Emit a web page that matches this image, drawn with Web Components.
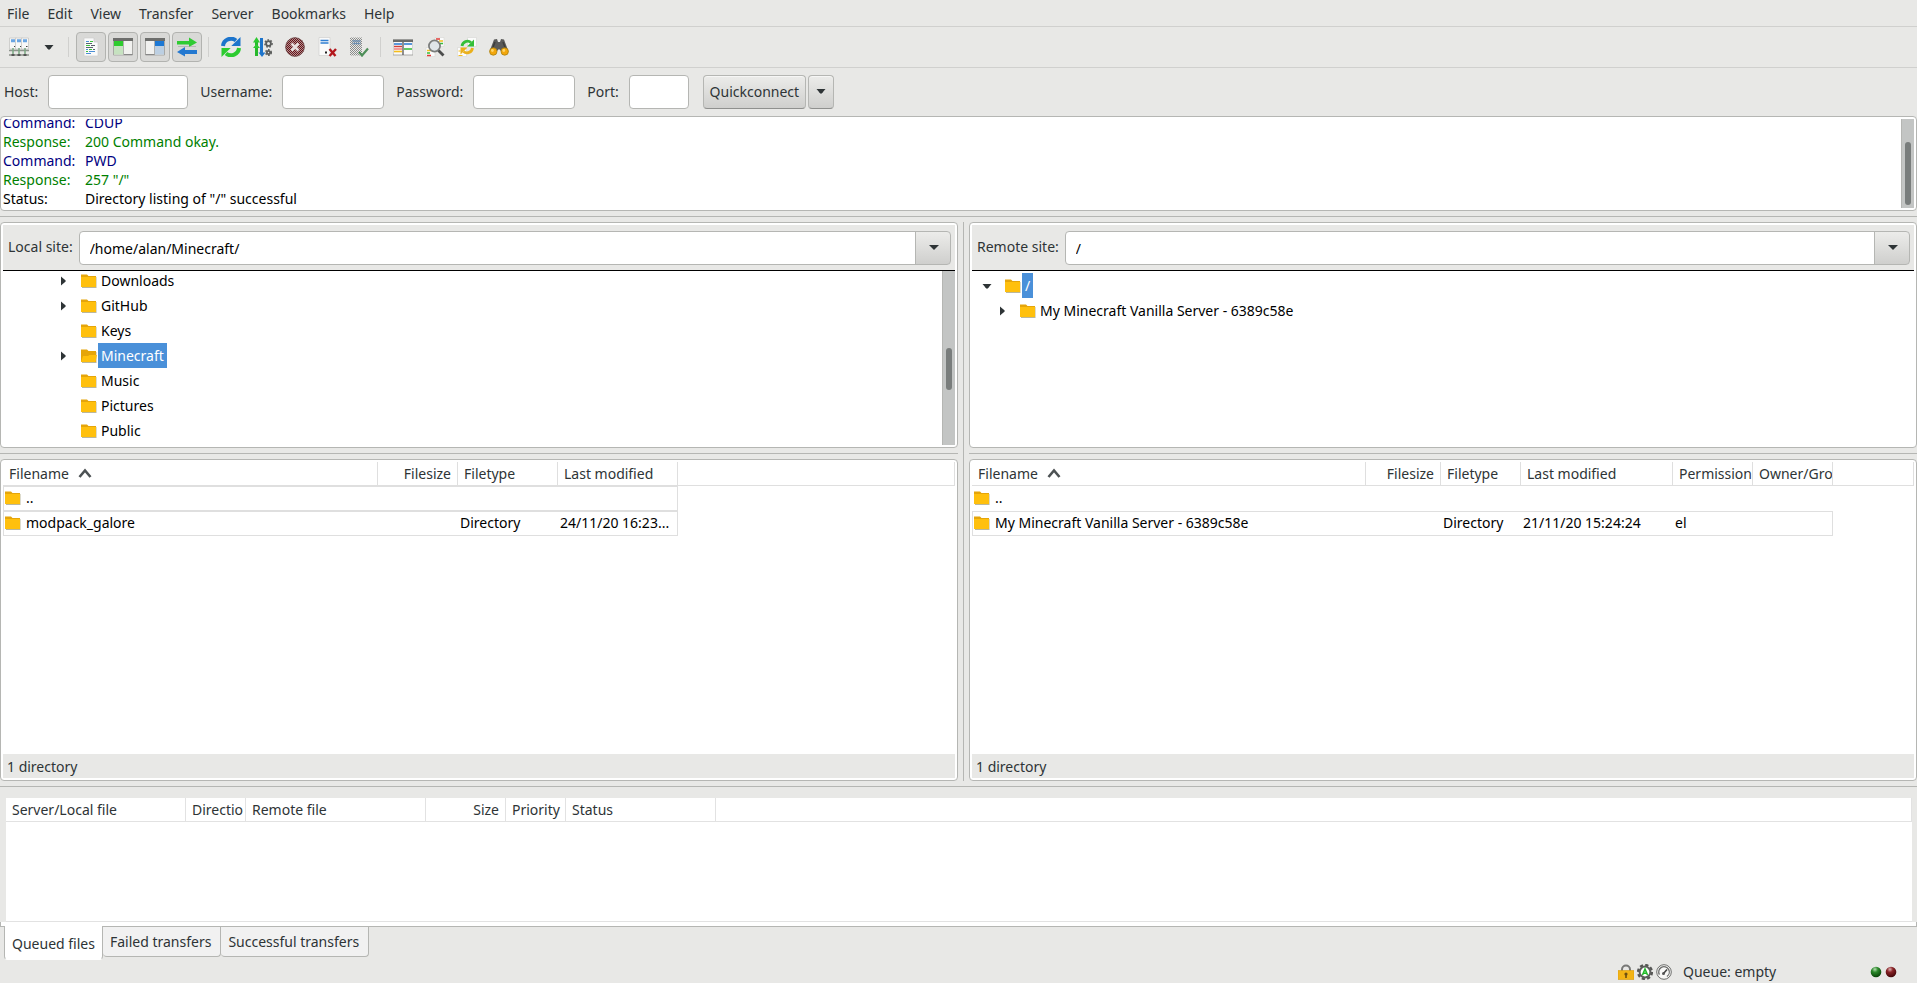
<!DOCTYPE html>
<html lang="en">
<head>
<meta charset="utf-8">
<title>FileZilla</title>
<style>
  html, body { margin: 0; }
  body {
    --bg: #e8e8e6; --line: #b5b6b3; --soft: #d0d0ce; --grid: #dfdfdf;
    --ink: #2e3436; --sel: #4a90d9; --base: #ffffff;
    background: var(--bg); color: var(--ink);
    font: 14px/19px "Noto Sans", sans-serif;
  }
</style>
</head>
<body>
<fz-app></fz-app>
<script>
const RESET = `*{box-sizing:border-box}
button,input,select{font:inherit;color:inherit;margin:0}
button{background:none;border:0;padding:0}
:focus-visible{outline:1px solid var(--sel)}`;

function define(name, css, html) {
  customElements.define(name, class extends HTMLElement {
    constructor() {
      super();
      this.attachShadow({ mode: 'open' });
    }
    connectedCallback() {
      const body = typeof html === 'function' ? html(this) : html;
      this.shadowRoot.innerHTML = `<style>${RESET}${css}</style>${body}`;
    }
  });
}

const FOLDER = `<path d="M1 2.5h5l1.500 1.500H15.500v11H1z" fill="#a9a583" opacity=".8"/><path d="M0 1.500h6L7.500 3H15v11H0z" fill="#e5a50a"/>`;
const GEAR = (x, y, r, c) => `<circle cx="${x}" cy="${y}" r="${r}" fill="none" stroke="${c}" stroke-width="1.800"/><circle cx="${x}" cy="${y}" r="${r + 1.2}" fill="none" stroke="${c}" stroke-width="1.500" stroke-dasharray="1.600 1.500"/>`;
const SERVER = (x) => `<path d="M${x} 1h7v11h-7z" fill="#f8f8f8" stroke="#c6c6c4" stroke-width=".8"/><path d="M${x + 1.5} 3h4M${x + 1.5} 4.500h4" stroke="#6aa5e2" stroke-width="1.500"/><path d="M${x + 4.500} 9.500h1.500" stroke="#444" stroke-width="1.200"/>`;
const SHEET = (x, y) => `<path d="M${x} ${y}h9v9h-9z" fill="#fbfbfb" stroke="#d6d6d4" stroke-width=".6"/>`;
const ICONS = {
  sites: [20, `${SERVER(0.5)}${SERVER(6.5)}${SERVER(12.5)}<path d="M0 13.500h20M0 18h20" stroke="#8d938c" stroke-width="1.600"/><path d="M4 11v7M10 11v7M16 11v7" stroke="#79a882" stroke-width="1.500"/><path d="M2.500 18h3M8.500 18h3M14.500 18h3" stroke="#555" stroke-width="2.200"/>`],
  log: [20, `<path d="M3 1h10l4 4v14H3z" fill="#fafafa" stroke="#cfcfcd" stroke-width=".7"/><path d="M13 1v4h4" fill="#ddd" stroke="#c4c4c2" stroke-width=".6"/><path d="M5 4.500h3M5 12.500h2M8 14.500h6M5 16.500h5" stroke="#4c8fd6" stroke-width="1.200"/><path d="M9 4.500h3M5 8.500h4M8 12.500h3M5 14.500h2" stroke="#39c03b" stroke-width="1.200"/><path d="M5 6.500h6M10 8.500h4M5 10.500h7M12 12.500h2" stroke="#58626b" stroke-width="1.200"/>`],
  local: [20, `<path d="M.5 2h19v16H.5z" fill="#f1f1ef" stroke="#a8a8a5"/><path d="M0 1h20v3H0z" fill="#6d6e6c"/><path d="M1 4h9v5H1z" fill="#2ecc2e"/><path d="M1 9h9v8.500H1z" fill="#c6e2c0"/><path d="M10.500 4v14" stroke="#b0b0ae"/><path d="M11 17.500h8.500" stroke="#888"/>`],
  remote: [20, `<path d="M.5 2h19v16H.5z" fill="#f1f1ef" stroke="#a8a8a5"/><path d="M0 1h20v3H0z" fill="#6d6e6c"/><path d="M10 4h9v5h-9z" fill="#1c78d4"/><path d="M10 9h9v8.500h-9z" fill="#bccfe2"/><path d="M9.500 4v14" stroke="#b0b0ae"/><path d="M.5 17.500H9.500" stroke="#888"/>`],
  transfers: [20, `<path d="M0 4h12V.5l8 5-8 4.500V7.500H0z" fill="#2fcb32"/><path d="M1 9.500h18" stroke="#9a9a98" opacity=".5"/><path d="M20 13H8v-3l-8 5 8 4.500V17h12z" fill="#2378d0"/>`],
  refresh: [20, `<path d="M2 9a8 7.800 0 0 1 13-5.500" fill="none" stroke="#1c74cc" stroke-width="4"/><path d="M19.500 0v9h-9.200z" fill="#1c74cc"/><path d="M18 11a8 7.800 0 0 1-13 5.500" fill="none" stroke="#2ccb30" stroke-width="4"/><path d="M.5 20v-9h9.200z" fill="#2ccb30"/>`],
  process: [20, `<path d="M3.500 3v16" stroke="#27b82b" stroke-width="3"/><path d="M0 5.500L3.500 0 7 5.500zM0 11h7l-3.500-4z" fill="#2cc930"/><path d="M8.500 1v15" stroke="#1d74cb" stroke-width="3"/><path d="M5.500 15.500L9 20l3.500-4.500z" fill="#1d74cb"/>${GEAR(15.5, 6.5, 2.4, '#5b5d5c')}${GEAR(15.5, 15.5, 1.6, '#5b5d5c')}`],
  cancel: [20, `<defs><pattern id="d" width="2" height="2" patternUnits="userSpaceOnUse"><path d="M0 0h1v1H0zM1 1h1v1H1z" fill="#6a1016"/></pattern></defs><circle cx="10" cy="10" r="9.500" fill="#b09494"/><circle cx="10" cy="10" r="9.500" fill="url(#d)"/><circle cx="10" cy="10" r="9.300" fill="none" stroke="#6b4a4a" stroke-width=".8"/><path d="M6.500 6.500l7 7M13.500 6.500l-7 7" stroke="#e7dede" stroke-width="2.600"/>`],
  disconnect: [20, `<path d="M2 .5h11v18H2z" fill="#fafafa" stroke="#d0d0ce" stroke-width=".7"/><path d="M3.500 3.500h8M3.500 6h8" stroke="#2e7dd1" stroke-width="1.600"/><path d="M8 15.500h2" stroke="#222" stroke-width="2"/><path d="M12.500 12l6 7M19 12l-6.500 7" stroke="#b3161c" stroke-width="2.400"/>`],
  reconnect: [20, `<defs><pattern id="d" width="2" height="2" patternUnits="userSpaceOnUse"><path d="M0 0h1v1H0zM1 1h1v1H1z" fill="#8b8d8c"/></pattern></defs><path d="M1 .5h12v18H1z" fill="#e9e9e7"/><path d="M1 .5h12v18H1z" fill="url(#d)"/><path d="M3.500 4h8M3.500 6.500h8" stroke="#6c8fb2" stroke-width="1.300"/><path d="M10 15l3 3.500 6-7" fill="none" stroke="#4e8f59" stroke-width="2.200"/>`],
  filter: [20, `<path d="M0 3h20v15H0z" fill="#fafafa" stroke="#9a9a98" stroke-width=".8"/><path d="M0 2.500h20V5H0z" fill="#6b6c6a"/><path d="M1 7h8" stroke="#2577d0" stroke-width="1.500"/><path d="M1 9.500h8" stroke="#d3403a" stroke-width="1.500"/><path d="M1 12h8" stroke="#ef3b38"/><path d="M1 14.500h8" stroke="#f4bd1c" stroke-width="1.600"/><path d="M11 7h8" stroke="#2577d0" stroke-width="1.500"/><path d="M11 12h8" stroke="#2fb832" stroke-width="1.500"/><path d="M10 5v13" stroke="#555" stroke-width="1.300"/>`],
  search: [20, `${SHEET(10, 0.5)}${SHEET(1, 10.5)}<path d="M11 2h4M2 18.500h4" stroke="#e03a35" stroke-width="1.500"/><path d="M14 4h4M2 13.500h4" stroke="#f4bd1c" stroke-width="1.500"/><path d="M15 6.500h3M2 16h3" stroke="#35bf38" stroke-width="1.500"/><circle cx="9.500" cy="9" r="5.600" fill="#dfe5e8" stroke="#7b7d7c" stroke-width="1.700"/><path d="M13.500 13.500l5 5" stroke="#4c4d4c" stroke-width="2.800"/>`],
  sync: [20, `${SHEET(10.5, 0.5)}${SHEET(0.5, 10.5)}<path d="M5 9a5.500 5.500 0 0 1 9-3.500" fill="none" stroke="#35bf38" stroke-width="2.800"/><path d="M17 2.500V9.500h-7z" fill="#35bf38"/><path d="M15.500 11a5.500 5.500 0 0 1-9 3.500" fill="none" stroke="#eab01c" stroke-width="2.800"/><path d="M3.500 17.500v-7h7z" fill="#eab01c"/><path d="M1.500 14h2M1.500 18.500h4" stroke="#f4bd1c"/>`],
  find: [20, `<path d="M5 2.500l3-.5 1 3h2l1-3 3 .5 4.500 12h-7L10 12l-2.500 2.500H.5z" fill="#5a5a59"/><path d="M6 5l-3 8M14 5l3 8" stroke="#3e3f3e" stroke-width="1.500"/><circle cx="4.300" cy="14.500" r="3.700" fill="#f3a70c" stroke="#a8800f" stroke-width=".8"/><circle cx="15.700" cy="14.500" r="3.700" fill="#f3a70c" stroke="#a8800f" stroke-width=".8"/><circle cx="3.400" cy="13.500" r="1.400" fill="#ffd66b"/><circle cx="14.800" cy="13.500" r="1.400" fill="#ffd66b"/>`],
  folder: [16, `${FOLDER}<path d="M0 4h15v10H0z" fill="#ffc00d"/>`],
  open: [16, `${FOLDER}<path d="M2 8h5l1.500-1H16l-1.500 7H0z" fill="#ffc00d"/>`],
  down: [16, `<path d="M3.500 6h9L9.500 9.500h-3z" fill="var(--ink)"/><path d="M6 9h4l-2 2z" fill="var(--ink)"/>`],
  right: [16, `<path d="M6 3.500v9l4-3.500v-2z" fill="var(--ink)"/><path d="M9.500 6.500v3L11 8z" fill="var(--ink)"/>`],
  sort: [16, `<path d="M2.500 11L8 4.500l5.500 6.500" fill="none" stroke="#4d5254" stroke-width="2.600"/>`],
  lock: [16, `<path d="M4 8V5.500a4 4 0 0 1 8 0V8" fill="none" stroke="#777876" stroke-width="2"/><path d="M0 6.500h16v9H0z" fill="#f3b415" stroke="#d99a0b" stroke-width=".6"/><circle cx="8" cy="10" r="1.600" fill="#6d4f12"/><path d="M8 10v4" stroke="#6d4f12" stroke-width="1.600"/>`],
  auto: [16, `<circle cx="8" cy="8" r="6.900" fill="none" stroke="#555654" stroke-width="2.400" stroke-dasharray="3.200 2.220"/><circle cx="8" cy="8" r="5.400" fill="#fff" stroke="#5d5e5c" stroke-width="2"/><path d="M5.500 11L8 5l2.500 6M6.200 9.200h3.600" fill="none" stroke="#1fbb27" stroke-width="1.600"/>`],
  speed: [16, `<circle cx="8" cy="8" r="7.300" fill="#f7f7f6" stroke="#6c6d6b" stroke-width="1"/><circle cx="8" cy="8" r="5.300" fill="none" stroke="#6c6d6b" stroke-width="1.300" stroke-dasharray="24 9.300" transform="rotate(150 8 8)"/><path d="M7.500 9.500L11 5.500" stroke="#3f403f" stroke-width="1.500"/><circle cx="7.500" cy="9.500" r="1.500" fill="#555"/>`],
  recv: [12, `<defs><radialGradient id="g" cx=".4" cy=".25" r=".8"><stop offset="0" stop-color="#b8dcb4"/><stop offset=".35" stop-color="#2b8a2b"/><stop offset="1" stop-color="#043c04"/></radialGradient></defs><circle cx="6" cy="6" r="5.300" fill="url(#g)"/>`],
  send: [12, `<defs><radialGradient id="g" cx=".4" cy=".25" r=".8"><stop offset="0" stop-color="#dcb4b4"/><stop offset=".35" stop-color="#8a2428"/><stop offset="1" stop-color="#3c0406"/></radialGradient></defs><circle cx="6" cy="6" r="5.300" fill="url(#g)"/>`]
};

define('fz-icon', `:host{display:inline-flex;flex:none}svg{display:block}`, el => {
  const [s, art] = ICONS[el.getAttribute('name')];
  return `<svg width="${s}" height="${s}" viewBox="0 0 ${s} ${s}" aria-hidden="true">${art}</svg>`;
});

define('fz-scrollbar', `:host{display:flex;flex-direction:column;flex:none;width:13px;background:#c3c5c4;border-left:1px solid var(--line);padding:3px}
i{flex:var(--before,0) 0 0}b{flex:var(--size,1) 0 0;background:#797d7c;border-radius:3px;width:6px}u{flex:var(--after,0) 0 0}`,
  `<i></i><b></b><u></u>`);

/* Draggable-looking divider between two areas. */
define('fz-sash', `:host{display:flex;flex:none;height:11px;flex-direction:column;justify-content:center}
:host([vertical]){height:auto;width:11px;flex-direction:row}
i{flex:none;height:1px;background:var(--line)}
:host([vertical]) i{height:auto;width:1px}`, `<i></i>`);

define('fz-frame', `:host{display:flex;flex-direction:column;flex:none;min-width:0;background:var(--base);border:1px solid var(--line);border-radius:4px;padding:2px}`, `<slot></slot>`);

define('fz-menubar', `:host{display:block;border-bottom:1px solid var(--soft)}
nav{display:flex;gap:18px;padding:4px 7px 3px}`,
  `<nav>${['File', 'Edit', 'View', 'Transfer', 'Server', 'Bookmarks', 'Help'].map(t => `<button>${t}</button>`).join('')}</nav>`);

define('fz-tool', `:host{display:flex}
button{display:flex;align-items:center;justify-content:center;width:30px;height:30px;border:1px solid transparent;border-radius:4px}
:host([narrow]) button{width:26px}
button[aria-pressed=true]{background:#d9d9d7;border-color:#b2b3b0}`,
  el => `<button aria-label="${el.getAttribute('label')}"${el.hasAttribute('on') ? ' aria-pressed="true"' : ''}><fz-icon name="${el.getAttribute('icon')}"></fz-icon></button>`);

const tool = (icon, label, extra = '') => `<fz-tool icon="${icon}" label="${label}" ${extra}></fz-tool>`;
define('fz-toolbar', `:host{display:flex;align-items:center;gap:2px;padding:5px 4px;border-bottom:1px solid var(--soft)}
hr{flex:none;width:1px;height:20px;border:0;margin:0 5px 0 4px;background:var(--soft)}`,
  tool('sites', 'Site Manager') + tool('down', 'Site list', 'narrow') + '<hr>' +
  tool('log', 'Message log', 'on') + tool('local', 'Local tree', 'on') + tool('remote', 'Remote tree', 'on') + tool('transfers', 'Transfer queue', 'on') + '<hr>' +
  tool('refresh', 'Refresh') + tool('process', 'Process queue') + tool('cancel', 'Cancel') + tool('disconnect', 'Disconnect') + tool('reconnect', 'Reconnect') + '<hr>' +
  tool('filter', 'Filters') + tool('search', 'Compare directories') + tool('sync', 'Synchronized browsing') + tool('find', 'Find files'));

define('fz-quickconnect', `:host{display:flex;align-items:center;padding:7px 4px}
label{margin-right:10px;padding-bottom:2px}
input{height:34px;border:1px solid var(--line);border-radius:4px;background:var(--base);padding:0 8px;margin-right:12px}
.host{width:140px}.mid{width:102px}.port{width:60px}
button{height:34px;padding-bottom:2px;border:1px solid var(--line);border-bottom-color:#8f908e;border-radius:4px;background:linear-gradient(#ececea,#cfcfcd);display:flex;align-items:center;justify-content:center;box-shadow:inset 0 1px #f6f6f5}
.go{width:103px;margin:0 2px}.more{width:26px}`,
  `<label for="h">Host:</label><input id="h" class="host"><label for="u">Username:</label><input id="u" class="mid"><label for="p">Password:</label><input id="p" class="mid" type="password"><label for="o">Port:</label><input id="o" class="port"><button class="go">Quickconnect</button><button class="more" aria-label="Recent servers"><fz-icon name="down"></fz-icon></button>`);

define('fz-log-line', `:host{display:flex;flex:none}span{width:82px;flex:none}
:host([kind=Command]){color:#000080}:host([kind=Response]){color:#008000}:host([kind=Status]){color:#000}`,
  el => `<span>${el.getAttribute('kind')}:</span><slot></slot>`);

define('fz-log', `:host{display:block}
.row{display:flex;height:89px}
.lines{flex:1;min-width:0;overflow:hidden;display:flex;flex-direction:column;justify-content:flex-end}
fz-scrollbar{--before:20;--size:64;--after:0}`,
  `<fz-frame><div class="row"><div class="lines"><slot></slot></div><fz-scrollbar></fz-scrollbar></div></fz-frame>`);

define('fz-site-bar', `:host{display:flex;align-items:center;background:var(--bg);border-bottom:1px solid #000;padding:6px 4px 5px 5px;gap:6px}
label{padding-bottom:3px}
select{appearance:none;flex:1;min-width:0;height:34px;border:1px solid var(--line);border-radius:4px;padding:0 40px 0 10px;color:#000;
background:url("data:image/svg+xml,%3Csvg xmlns='http://www.w3.org/2000/svg' width='10' height='6'%3E%3Cpath d='M0 0h10L6 4 5 5 4 4z' fill='%232e3436'/%3E%3C/svg%3E") no-repeat right 11px center, linear-gradient(var(--line),var(--line)) no-repeat right 34px top/1px 100%, linear-gradient(#ececea,#cfcfcd) no-repeat right/34px 100%, var(--base)}`,
  el => `<label for="s">${el.getAttribute('label')}</label><select id="s"><option>${el.getAttribute('path')}</option></select>`);

define('fz-tree-item', `:host{display:flex;flex:none;align-items:center;height:25px;color:#000;padding-left:calc(7px + 15px * var(--depth,0))}
.arrow{width:26px;height:16px}
.label{line-height:25px;padding:0 3px;margin-left:1px;white-space:nowrap}
:host([selected]) .label{background:var(--sel);color:#fff}`,
  el => `<span class="arrow">${el.hasAttribute('arrow') ? `<fz-icon name="${el.getAttribute('arrow')}"></fz-icon>` : ''}</span><fz-icon name="${el.getAttribute('icon') || 'folder'}"></fz-icon><span class="label"><slot></slot></span>`);

define('fz-tree', `:host{display:flex;height:174px}
.items{flex:1;min-width:0;display:flex;flex-direction:column;overflow:hidden;padding-top:2px}
:host([scrolled]) .items{justify-content:flex-end;padding:0 0 2px}
fz-scrollbar{--before:75;--size:43;--after:53}`,
  el => `<div class="items"><slot></slot></div>${el.hasAttribute('scrolled') ? '<fz-scrollbar></fz-scrollbar>' : ''}`);

/* Column table. cols: [title, width, align]; rows: arrays of texts, boxed rows get a border. */
function tableHTML(cols, rows) {
  const head = cols.map(([t, w, a], i) =>
    `<th style="width:${w}px"${a ? ' class="r"' : ''}>${t}${i === 0 && rows.length ? '<fz-icon name="sort"></fz-icon>' : ''}</th>`).join('');
  const body = rows.map(r => `<tr${r.box ? ' class="box"' : ''}>${cols.map((c, i) =>
    `<td>${i === 0 ? '<fz-icon name="folder"></fz-icon>' : ''}<span>${r.cells[i] || ''}</span></td>`).join('')}<td class="rest"></td></tr>`).join('');
  return `<table><thead><tr>${head}<th></th></tr></thead><tbody>${body}</tbody></table>`;
}
const TABLE = `table{width:100%;table-layout:fixed;border-collapse:separate;border-spacing:0;background:var(--base)}
th{height:24px;padding:0 0 0 6px;font-weight:400;text-align:left;border:solid var(--grid);border-width:0 1px 1px 0;white-space:nowrap;overflow:hidden}
th.r{text-align:right;padding:0 6px 0 0}
th fz-icon{vertical-align:-3px;margin-left:8px}
td{height:25px;padding:0 0 2px 2px;white-space:nowrap;overflow:hidden;color:#000;border:solid transparent;border-width:1px 0}
td:first-child{padding-left:1px;border-left-width:1px}
td fz-icon{vertical-align:-3px;margin-right:5px}
.box td:not(.rest){border-color:var(--grid)}
.box td:nth-last-child(2){border-right:1px solid var(--grid)}`;

const LISTS = {
  local: {
    cols: [['Filename', 375], ['Filesize', 80, 1], ['Filetype', 100], ['Last modified', 120]],
    rows: [{ box: 1, cells: ['..'] }, { box: 1, cells: ['modpack_galore', '', 'Directory', '24/11/20 16:23...'] }]
  },
  remote: {
    cols: [['Filename', 394], ['Filesize', 75, 1], ['Filetype', 80], ['Last modified', 152], ['Permission', 80], ['Owner/Gro', 80]],
    rows: [{ cells: ['..'] }, { box: 1, cells: ['My Minecraft Vanilla Server - 6389c58e', '', 'Directory', '21/11/20 15:24:24', 'el'] }]
  },
  queue: {
    cols: [['Server/Local file', 180], ['Directio', 60], ['Remote file', 180], ['Size', 80, 1], ['Priority', 60], ['Status', 150]],
    rows: []
  }
};

define('fz-table', `:host{display:block;overflow:hidden}${TABLE}`, el => {
  const { cols, rows } = LISTS[el.getAttribute('list')];
  return tableHTML(cols, rows);
});

define('fz-file-list', `:host{display:flex;flex-direction:column;flex:1}
fz-frame{flex:1}fz-table{flex:1}
footer{background:var(--bg);padding:3px 4px 2px}`,
  el => `<fz-frame><fz-table list="${el.getAttribute('list')}"></fz-table><footer>1 directory</footer></fz-frame>`);

define('fz-pane', `:host{display:flex;flex-direction:column;min-width:0}`,
  el => `<fz-frame><fz-site-bar label="${el.getAttribute('label')}" path="${el.getAttribute('path')}"></fz-site-bar><slot></slot></fz-frame><fz-sash></fz-sash><fz-file-list list="${el.getAttribute('list')}"></fz-file-list>`);

define('fz-queue', `:host{display:block;padding-top:6px}
fz-table{height:124px;margin:0 5px 0 6px;background:var(--base);border-bottom:1px solid var(--grid)}
fz-table{--grid:#e2e2e2}
.edge{height:5px;background:var(--base);border:solid var(--line);border-width:0 1px 1px}
nav{display:flex;align-items:flex-start;padding-left:4px}
button{height:30px;padding:0 9px 0 7px;background:#f1f1f1;border:solid var(--line);border-width:0 1px 1px 0;border-radius:0 0 4px 4px}
button[aria-selected=true]{position:relative;height:34px;margin-top:-1px;padding:2px 7px 0;background:var(--base);border-left-width:1px;border-bottom-color:var(--base)}`,
  `<fz-table list="queue"></fz-table><div class="edge"></div><nav role="tablist"><button role="tab" aria-selected="true">Queued files</button><button role="tab">Failed transfers</button><button role="tab">Successful transfers</button></nav>`);

define('fz-statusbar', `:host{display:flex;justify-content:flex-end;align-items:center;height:23px;padding-right:20px}
.icons{display:flex;gap:3px;margin-right:11px}
.text{width:187px}
.leds{display:flex;gap:3px}`,
  `<span class="icons"><fz-icon name="lock"></fz-icon><fz-icon name="auto"></fz-icon><fz-icon name="speed"></fz-icon></span><span class="text">Queue: empty</span><span class="leds"><fz-icon name="recv"></fz-icon><fz-icon name="send"></fz-icon></span>`);

define('fz-app', `:host{display:flex;flex-direction:column;min-height:100vh}
main{flex:1;display:grid;grid-template-columns:minmax(0,958fr) 11px minmax(0,948fr)}`,
  `<fz-menubar></fz-menubar><fz-toolbar></fz-toolbar><fz-quickconnect></fz-quickconnect>
<fz-log>
  <fz-log-line kind="Command">CDUP</fz-log-line>
  <fz-log-line kind="Response">200 Command okay.</fz-log-line>
  <fz-log-line kind="Command">PWD</fz-log-line>
  <fz-log-line kind="Response">257 "/"</fz-log-line>
  <fz-log-line kind="Status">Directory listing of "/" successful</fz-log-line>
</fz-log>
<fz-sash></fz-sash>
<main>
  <fz-pane label="Local site:" path="/home/alan/Minecraft/" list="local">
    <fz-tree scrolled style="--depth:3">
      <fz-tree-item arrow="right">Downloads</fz-tree-item>
      <fz-tree-item arrow="right">GitHub</fz-tree-item>
      <fz-tree-item>Keys</fz-tree-item>
      <fz-tree-item arrow="right" icon="open" selected>Minecraft</fz-tree-item>
      <fz-tree-item>Music</fz-tree-item>
      <fz-tree-item>Pictures</fz-tree-item>
      <fz-tree-item>Public</fz-tree-item>
    </fz-tree>
  </fz-pane>
  <fz-sash vertical></fz-sash>
  <fz-pane label="Remote site:" path="/" list="remote">
    <fz-tree>
      <fz-tree-item arrow="down" selected>/</fz-tree-item>
      <fz-tree-item arrow="right" style="--depth:1">My Minecraft Vanilla Server - 6389c58e</fz-tree-item>
    </fz-tree>
  </fz-pane>
</main>
<fz-sash></fz-sash>
<fz-queue></fz-queue>
<fz-statusbar></fz-statusbar>`);
</script>
</body>
</html>
